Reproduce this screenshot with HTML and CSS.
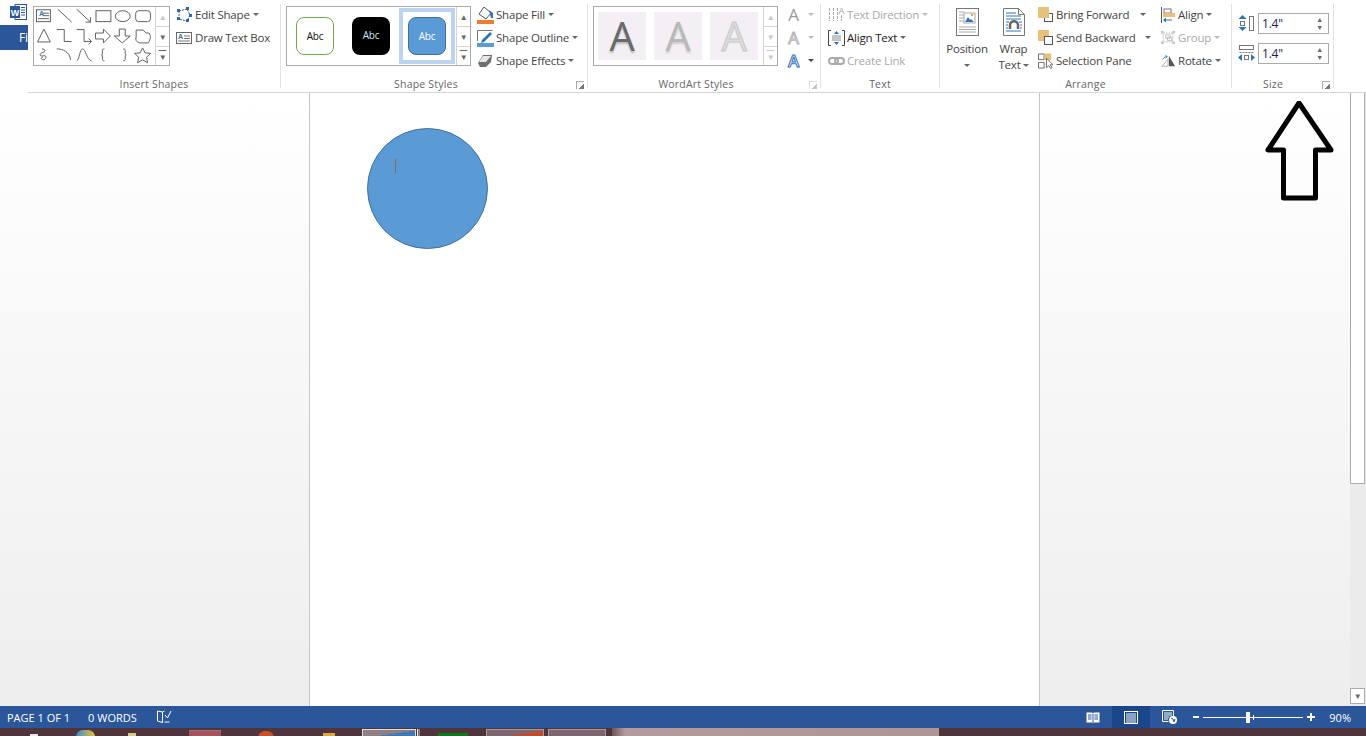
FILE: index.html
```html
<!DOCTYPE html>
<html lang="en">
<head>
    <meta charset="UTF-8">
    <title>Document - Word</title>
    <link rel="stylesheet" href="styles.css">
</head>
<body>
    <div class="ribbon">
        <div class="corner">
            <svg class="word-logo" width="17" height="16" viewBox="0 0 17 16">
                <rect x="5" y="0.500" width="11.500" height="15" fill="#fff" stroke="#2b579a"/>
                <path d="M11 3.500h4M11 6h4M11 8.500h4M11 11h4" stroke="#2b579a"/>
                <rect x="0" y="2" width="10" height="12" fill="#2b579a"/>
                <text x="5" y="11.500" class="word-w">W</text>
            </svg>
            <div class="file-tab">Fi</div>
        </div>
        <div class="groups">

            <!-- Insert Shapes -->
            <div class="group g-shapes">
                <div class="group-body">
                    <div class="gallery shapes-gallery">
                        <svg class="shapes-grid" width="122" height="58" viewBox="0 0 122 58">
                            <g fill="none" stroke="#606060">
                                <rect x="2.500" y="2.500" width="14" height="12" fill="#fff"/>
                                <path d="M9 6h6M9 8.500h6M4 11.500h11"/>
                                <path d="M24 2l14 13"/>
                                <path d="M43 2l14 13M57 10v5h-5"/>
                                <rect x="62.500" y="3.500" width="15" height="11"/>
                                <ellipse cx="89.500" cy="9" rx="7.500" ry="5.500"/>
                                <rect x="102.500" y="3.500" width="15" height="11" rx="3"/>
                            </g>
                            <g fill="none" stroke="#606060" transform="translate(0 -7)">
                                <path d="M10 29l6.500 13H3.500z"/>
                                <path d="M23 29.500h7.500v12H38"/>
                                <path d="M43 29.500h7.500v12H58M55 38.500l3 3-3 3"/>
                                <path d="M62 33h8v-4l7 7-7 7v-4h-8z"/>
                                <path d="M86 29h6v7h5l-8 7-8-7h5z"/>
                                <path d="M103 30h7l3 3h3c2 3 2 6-1 10h-8c-4-1-5-3-4-6z"/>
                            </g>
                            <g fill="none" stroke="#606060" transform="translate(0 -4)">
                                <path d="M8 46c4 0 4 3 0 4-3 1-2 4 1 3 4-1 4 3 1 4-3 0-3-2-1-3"/>
                                <path d="M23 46c6 0 13 3 14 11"/>
                                <path d="M43 58c3-1 3-12 6-12s4 11 9 12"/>
                                <path d="M71 46c-2 0-2 1-2 2v3c0 1-1 1-1 1s1 0 1 1v3c0 1 0 2 2 2"/>
                                <path d="M90 46c2 0 2 1 2 2v3c0 1 1 1 1 1s-1 0-1 1v3c0 1 0 2-2 2"/>
                                <path d="M109.500 45l2.500 5 5.500.5-4 4 1 5.500-5-3-5 3 1-5.500-4-4 5.500-.5z"/>
                            </g>
                            <text x="5" y="8.500" class="tiny-a">A</text>
                        </svg>
                        <div class="spin-col">
                            <div class="spin-btn off">▲</div>
                            <div class="spin-btn">▼</div>
                            <div class="spin-btn more">▼</div>
                        </div>
                    </div>
                    <div class="cmd-col shape-cmds">
                        <div class="cmd">
                            <svg class="ico" width="16" height="16" viewBox="0 0 16 16">
                                <path d="M3 4l8-2 3 6-3 6-8-2z" fill="none" stroke="#555" stroke-dasharray="2 1"/>
                                <path d="M1 2h3v3H1zM10 0h3v3h-3zM13 7h3v3h-3zM10 12h3v3h-3zM1 10h3v3H1z" fill="#2b6cb0"/>
                            </svg>
                            <span>Edit Shape</span><i class="caret"></i>
                        </div>
                        <div class="cmd">
                            <svg class="ico" width="16" height="16" viewBox="0 0 16 16">
                                <rect x="0.500" y="2.500" width="15" height="11" fill="#fff" stroke="#666"/>
                                <path d="M8 6h6M8 8.500h6M2 11h12" stroke="#777"/>
                                <text x="2" y="9" class="tiny-a">A</text>
                            </svg>
                            <span>Draw Text Box</span>
                        </div>
                    </div>
                </div>
                <div class="group-label">Insert Shapes</div>
            </div>

            <!-- Shape Styles -->
            <div class="group g-styles">
                <div class="group-body">
                    <div class="gallery styles-gallery">
                        <div class="style-tiles">
                            <div class="style-cell"><div class="style-tile tile-green">Abc</div></div>
                            <div class="style-cell"><div class="style-tile tile-black">Abc</div></div>
                            <div class="style-cell selected"><div class="style-tile tile-blue">Abc</div></div>
                        </div>
                        <div class="spin-col">
                            <div class="spin-btn">▲</div>
                            <div class="spin-btn">▼</div>
                            <div class="spin-btn more">▼</div>
                        </div>
                    </div>
                    <div class="cmd-col fill-cmds">
                        <div class="cmd">
                            <svg class="ico" width="17" height="18" viewBox="0 0 17 18">
                                <path d="M2 8l5-7 7 6-5 6z" fill="#fff" stroke="#555"/>
                                <path d="M12 4l4 3v5h-2l-1-4z" fill="#2e74b5"/>
                                <rect x="0" y="14" width="17" height="4" fill="#ed7d31"/>
                            </svg>
                            <span>Shape Fill</span><i class="caret"></i>
                        </div>
                        <div class="cmd">
                            <svg class="ico" width="17" height="18" viewBox="0 0 17 18">
                                <path d="M.5 12V1.500h15" fill="none" stroke="#777"/>
                                <path d="M5 11l8-8 2 2-8 8-3 1z" fill="#2e74b5"/>
                                <rect x="0" y="14" width="17" height="4" fill="#5b9bd5"/>
                            </svg>
                            <span>Shape Outline</span><i class="caret"></i>
                        </div>
                        <div class="cmd">
                            <svg class="ico" width="17" height="16" viewBox="0 0 17 16">
                                <path d="M1 10l5-8h9l-1 7-5 5H3z" fill="#6e6e6e"/>
                                <path d="M2 9l4-6h8l-5 6z" fill="#e6e6e6"/>
                            </svg>
                            <span>Shape Effects</span><i class="caret"></i>
                        </div>
                    </div>
                </div>
                <div class="group-label">Shape Styles</div>
                <i class="launcher"></i>
            </div>

            <!-- WordArt Styles -->
            <div class="group g-wordart">
                <div class="group-body">
                    <div class="gallery wordart-gallery">
                        <div class="wa-tiles">
                            <div class="wa-tile wa-dark">A</div>
                            <div class="wa-tile wa-mid">A</div>
                            <div class="wa-tile wa-light">A</div>
                        </div>
                        <div class="spin-col">
                            <div class="spin-btn off">▲</div>
                            <div class="spin-btn off">▼</div>
                            <div class="spin-btn more off">▼</div>
                        </div>
                    </div>
                    <div class="cmd-col wa-cmds">
                        <div class="cmd"><span class="wa-a wa-a-fill">A</span><i class="caret off"></i></div>
                        <div class="cmd"><span class="wa-a wa-a-line">A</span><i class="caret off"></i></div>
                        <div class="cmd"><span class="wa-a wa-a-fx">A</span><i class="caret dark"></i></div>
                    </div>
                </div>
                <div class="group-label">WordArt Styles</div>
                <i class="launcher off"></i>
            </div>

            <!-- Text -->
            <div class="group g-text">
                <div class="group-body">
                    <div class="cmd-col text-cmds">
                        <div class="cmd disabled">
                            <svg class="ico" width="17" height="17" viewBox="0 0 17 17">
                                <path d="M1.500 2v13M5.500 2v13M9.500 2v13M13.500 9v6" stroke="#aaa" stroke-dasharray="3 1"/>
                                <text x="10.500" y="7.500" class="dir-a">A</text>
                            </svg>
                            <span>Text Direction</span><i class="caret off"></i>
                        </div>
                        <div class="cmd">
                            <svg class="ico" width="17" height="16" viewBox="0 0 17 16">
                                <path d="M3 .5H.5v15H3M14 .5h2.500v15H14" fill="none" stroke="#444"/>
                                <path d="M4 6h9M4 8h9M4 10h9" stroke="#888"/>
                                <path d="M8.500 1l2.500 3H6zM8.500 15L6 12h5z" fill="#2e74b5"/>
                            </svg>
                            <span class="ink">Align Text</span><i class="caret"></i>
                        </div>
                        <div class="cmd disabled">
                            <svg class="ico" width="17" height="10" viewBox="0 0 17 10">
                                <rect x="1" y="2" width="9" height="6" rx="3" fill="none" stroke="#aaa" stroke-width="2"/>
                                <rect x="7" y="2" width="9" height="6" rx="3" fill="none" stroke="#aaa" stroke-width="2"/>
                            </svg>
                            <span>Create Link</span>
                        </div>
                    </div>
                </div>
                <div class="group-label">Text</div>
            </div>

            <!-- Arrange -->
            <div class="group g-arrange">
                <div class="group-body">
                    <div class="big-btn btn-position">
                        <svg width="23" height="28" viewBox="0 0 23 28">
                            <rect x="0.500" y="0.500" width="22" height="27" fill="#fff" stroke="#777"/>
                            <path d="M3 4h5M3 7h5M3 10h5M3 13h5M3 19h17M3 21.500h17M3 24h17" stroke="#aaa"/>
                            <rect x="8" y="5" width="11" height="10" fill="#fff" stroke="#aaa"/>
                            <path d="M9 14l3-5 2 3 1-1 3 3z" fill="#2e74b5"/>
                            <circle cx="16" cy="7" r="1.200" fill="#e8a33d"/>
                        </svg>
                        <div class="big-label">Position</div>
                        <i class="caret"></i>
                    </div>
                    <div class="big-btn btn-wrap">
                        <svg width="22" height="28" viewBox="0 0 22 28">
                            <path d="M.5.500h15l6 6v21H.5z" fill="#fff" stroke="#777"/>
                            <path d="M15.500.500v6h6" fill="none" stroke="#777"/>
                            <path d="M3 5h10M3 8h15M3 11h15M3 14h3M16 14h3M3 17h2M17 17h2M3 20h2M17 20h2M3 23h15" stroke="#2e74b5"/>
                            <path d="M7 21v-4c0-5 8-5 8 0v4" fill="none" stroke="#666" stroke-width="2.500"/>
                        </svg>
                        <div class="big-label">Wrap<br>Text<i class="caret"></i></div>
                    </div>
                    <div class="cmd-col order-cmds">
                        <div class="cmd">
                            <svg class="ico" width="15" height="15" viewBox="0 0 15 15">
                                <rect x="6.500" y="6.500" width="8" height="8" fill="#fff" stroke="#555"/>
                                <rect x="0" y="0" width="11" height="11" fill="#e8c07d"/>
                            </svg>
                            <span>Bring Forward</span><i class="caret far"></i>
                        </div>
                        <div class="cmd">
                            <svg class="ico" width="15" height="15" viewBox="0 0 15 15">
                                <rect x="0" y="0" width="11" height="11" fill="#e8c07d"/>
                                <rect x="6.500" y="6.500" width="8" height="8" fill="#fff" stroke="#555"/>
                            </svg>
                            <span>Send Backward</span><i class="caret near"></i>
                        </div>
                        <div class="cmd">
                            <svg class="ico" width="15" height="16" viewBox="0 0 16 16">
                                <path d="M.5.500h6v6h-6zM.5 9.500h6v6h-6z" fill="#fff" stroke="#666"/>
                                <rect x="7" y="0" width="7" height="7" fill="#e8c07d"/>
                                <path d="M9 5v10l2.500-2 2 3 1.500-1-2-3h3z" fill="#fff" stroke="#666"/>
                            </svg>
                            <span>Selection Pane</span>
                        </div>
                    </div>
                    <div class="cmd-col align-cmds">
                        <div class="cmd">
                            <svg class="ico" width="14" height="16" viewBox="0 0 14 16">
                                <path d="M.5 0v16" stroke="#555"/>
                                <rect x="3" y="2" width="7" height="4" fill="#fff" stroke="#777"/>
                                <rect x="2" y="6" width="12" height="4" fill="#e8c07d"/>
                                <path d="M2 13l3-2.500v2h6v1H5v2z" fill="#2e74b5"/>
                            </svg>
                            <span>Align</span><i class="caret"></i>
                        </div>
                        <div class="cmd disabled">
                            <svg class="ico" width="14" height="15" viewBox="0 0 16 15">
                                <path d="M2.500 2.500h11v10h-11z" fill="none" stroke="#bbb" stroke-dasharray="2 1"/>
                                <path d="M5.500 4.500h5v4h-5zM7.500 7h5v4h-5z" fill="none" stroke="#bbb"/>
                                <path d="M0 0h3v3H0zM13 0h3v3h-3zM0 12h3v3H0zM13 12h3v3h-3z" fill="#c4c4c4"/>
                            </svg>
                            <span>Group</span><i class="caret off"></i>
                        </div>
                        <div class="cmd">
                            <svg class="ico" width="14" height="14" viewBox="0 0 16 14">
                                <path d="M9 1l7 12H9z" fill="#555"/>
                                <path d="M8 5L1 13h7z" fill="none" stroke="#aaa"/>
                                <path d="M2 5c1-2 3-3 5-3M5 0l2 2-2 2" fill="none" stroke="#2e74b5"/>
                            </svg>
                            <span>Rotate</span><i class="caret"></i>
                        </div>
                    </div>
                </div>
                <div class="group-label">Arrange</div>
            </div>

            <!-- Size -->
            <div class="group g-size">
                <div class="group-body size-body">
                    <div class="size-row">
                        <svg width="17" height="17" viewBox="0 0 17 17">
                            <rect x="11.500" y="1.500" width="4" height="14" fill="#fff" stroke="#777"/>
                            <path d="M4.500 0l4 4h-8zM4.500 16l-4-4h8z" fill="#2e74b5"/>
                            <rect x="2.500" y="6.500" width="4" height="4" fill="none" stroke="#777"/>
                        </svg>
                        <div class="size-input"><span>1.4"</span><div class="arrows"><b>▲</b><b>▼</b></div></div>
                    </div>
                    <div class="size-row">
                        <svg width="17" height="17" viewBox="0 0 17 17">
                            <rect x="1.500" y="0.500" width="14" height="4" fill="#fff" stroke="#777"/>
                            <path d="M1.500 7.500h14" stroke="#777" stroke-dasharray="2 1"/>
                            <path d="M0 12.500l4-3.500v7zM17 12.500l-4-3.500v7z" fill="#2e74b5"/>
                            <rect x="6.500" y="10.500" width="4" height="4" fill="none" stroke="#777"/>
                        </svg>
                        <div class="size-input"><span>1.4"</span><div class="arrows"><b>▲</b><b>▼</b></div></div>
                    </div>
                </div>
                <div class="group-label">Size</div>
                <i class="launcher"></i>
            </div>
        </div>
    </div>

    <div class="workspace">
        <div class="doc-area">
            <div class="page">
                <div class="circle"><i class="text-cursor"></i></div>
            </div>
            <!-- arrow was pasted over the screenshot -->
            <svg class="note-arrow" width="70" height="102" viewBox="0 0 70 102">
                <path d="M34 2L3 49H18.500V97H50.500V49H66Z" fill="none" stroke="#000" stroke-width="5" stroke-linejoin="round"/>
            </svg>
        </div>
        <div class="scrollbar">
            <div class="thumb"></div>
            <div class="scroll-down">▼</div>
        </div>
    </div>

    <div class="statusbar">
        <span class="st-page">PAGE 1 OF 1</span>
        <span class="st-words">0 WORDS</span>
        <svg class="st-proof" width="16" height="14" viewBox="0 0 16 14">
            <path d="M6.500 2L1.500 1v10l5 1.500V2zM6.500 12.500V2l2-1M8.500 12h5" fill="none" stroke="#fff"/>
            <path d="M9 5l2.500 3L15 1" fill="none" stroke="#fff"/>
        </svg>
        <div class="st-right">
            <div class="view-btn">
                <svg width="14" height="13" viewBox="0 0 14 13">
                    <path d="M.5 1.500h5.500L7 2.500l1-1h5.500v10H8L7 12.500l-1-1H.5z" fill="#fff"/>
                    <path d="M7 3v9M2 4h3.500M2 6h3.500M2 8h3.500M8.500 4H12M8.500 6H12M8.500 8H12" stroke="#2b579a"/>
                </svg>
            </div>
            <div class="view-btn active">
                <svg width="14" height="13" viewBox="0 0 14 13">
                    <rect x="0.500" y="0.500" width="13" height="12" fill="none" stroke="#fff"/>
                    <path d="M2 3h10M2 5h10M2 7h10M2 9h10M2 11h10" stroke="#fff"/>
                </svg>
            </div>
            <div class="view-btn">
                <svg width="15" height="14" viewBox="0 0 15 14">
                    <path d="M.5.500h11v6M.5.500v11h6" fill="none" stroke="#fff"/>
                    <path d="M2 3h8M2 5h8M2 7h5M2 9h4" stroke="#fff"/>
                    <circle cx="11" cy="10" r="4" fill="#fff"/>
                    <path d="M9 8l2 1 1 3 1-3" stroke="#2b579a" fill="none"/>
                </svg>
            </div>
            <div class="zoom-ctl">
                <i class="zoom-minus"></i>
                <div class="zoom-track"><i class="zoom-mid"></i><i class="zoom-knob"></i></div>
                <i class="zoom-plus"></i>
            </div>
            <span class="zoom-pct">90%</span>
        </div>
    </div>

    <div class="taskbar">
        <i class="tb-item tb-a"></i>
        <i class="tb-item tb-b"></i>
        <i class="tb-item tb-c"></i>
        <i class="tb-item tb-1"></i>
        <i class="tb-item tb-2"></i>
        <i class="tb-item tb-3"></i>
        <i class="tb-item tb-word"></i>
        <i class="tb-item tb-edge"></i>
        <i class="tb-item tb-green"></i>
        <i class="tb-item tb-5"></i>
        <i class="tb-item tb-6"></i>
        <i class="tb-wall"></i>
    </div>
</body>
</html>
```

FILE: styles.css
```css
* {
    margin: 0;
    padding: 0;
    box-sizing: border-box;
}

html, body {
    height: 100%;
    overflow: hidden;
}

body {
    display: flex;
    flex-direction: column;
    font-family: 'Open Sans', 'Liberation Sans', sans-serif;
    font-size: 11.500px;
    letter-spacing: -0.2px;
    color: #444;
    background: #fff;
}

/* Ribbon */
.ribbon {
    display: flex;
    height: 93px;
    flex: none;
    background: #fff;
}

.corner {
    width: 28px;
    flex: none;
}

.word-logo {
    display: block;
    margin: 4px 0 5px 10px;
}

.word-w {
    font: bold 9px 'Liberation Sans', sans-serif;
    fill: #fff;
    text-anchor: middle;
}

.file-tab {
    height: 25px;
    background: #2b579a;
    color: #fff;
    font-size: 12px;
    line-height: 25px;
    padding-left: 19px;
    overflow: hidden;
}

.groups {
    flex: 1;
    display: flex;
    height: 93px;
    padding-top: 4px;
    border-bottom: 1px solid #d5d5d5;
}

.group {
    position: relative;
    height: 84px;
    border-right: 1px solid #e1e1e1;
    flex: none;
}

.g-shapes { width: 253px; }
.g-styles { width: 307px; }
.g-wordart { width: 233px; }
.g-text { width: 119px; }
.g-arrange { width: 292px; }
.g-size { width: 102px; }

.group-body {
    display: flex;
    height: 73px;
    padding-left: 5px;
}

.g-text .group-body { padding-left: 7px; }
.g-size .group-body { padding-left: 6px; }

.group-label {
    height: 11px;
    line-height: 14px;
    text-align: center;
    font-size: 10.500px;
    color: #666;
    letter-spacing: 0.2px;
}

.g-styles .group-label,
.g-wordart .group-label {
    padding-right: 16px;
}

.g-size .group-label {
    padding-right: 19px;
}

.launcher {
    position: absolute;
    right: 3px;
    bottom: -1px;
    width: 8px;
    height: 8px;
    border-left: 1px solid #aaa;
    border-top: 1px solid #aaa;
    background: linear-gradient(135deg, transparent 60%, #777 60%);
}

.launcher.off {
    opacity: 0.4;
}

/* Galleries */
.gallery {
    display: flex;
    height: 60px;
    margin-top: 2px;
    border: 1px solid #ababab;
    flex: none;
}

.shapes-gallery { width: 137px; }
.styles-gallery { width: 185px; }
.wordart-gallery { width: 185px; }

.shapes-grid {
    display: block;
    flex: 1;
}

.tiny-a {
    font: bold 7px 'Liberation Sans', sans-serif;
    fill: #2e74b5;
}

.dir-a {
    font: 9px 'Liberation Sans', sans-serif;
    fill: #999;
}

.spin-col {
    width: 14px;
    margin-left: auto;
    flex: none;
    display: flex;
    flex-direction: column;
    border-left: 1px solid #d4d4d4;
}

.spin-btn {
    flex: 1;
    text-align: center;
    font-size: 8px;
    line-height: 19px;
    color: #666;
    border-bottom: 1px solid #d4d4d4;
}

.spin-btn:last-child {
    border-bottom: none;
}

.spin-btn.off {
    color: #c8c8c8;
}

.spin-btn.more {
    text-decoration: overline;
}

.style-tiles {
    display: flex;
    flex: 1;
}

.style-cell {
    width: 56px;
    height: 56px;
    margin-top: 1px;
    display: flex;
    align-items: center;
    justify-content: center;
}

.style-cell.selected {
    border: 4px solid #bcd3ef;
}

.style-tile {
    width: 38px;
    height: 38px;
    border-radius: 8px;
    font-size: 10px;
    line-height: 36px;
    text-align: center;
}

.tile-green {
    border: 1px solid #70ad47;
    color: #111;
}

.tile-black {
    background: #000;
    color: #cfe2f5;
}

.tile-blue {
    background: #5b9bd5;
    border: 1px solid #41719c;
    color: #fff;
}

.wa-tiles {
    display: flex;
    flex: 1;
    gap: 8px;
    padding: 5px 0 0 4px;
}

.wa-tile {
    width: 48px;
    height: 48px;
    background: #f4eff4;
    text-align: center;
    font: 40px/48px 'Open Sans', sans-serif;
}

.wa-dark {
    color: #696969;
    text-shadow: 0 2px 2px #bbb;
}

.wa-mid {
    color: #b8b8b8;
    text-shadow: 0 2px 2px #ccc;
}

.wa-light {
    color: #dcdcdc;
    -webkit-text-stroke: 1px #c8c8c8;
}

/* Command rows */
.cmd-col {
    display: flex;
    flex-direction: column;
    flex: none;
    margin-top: -1px;
}

.cmd {
    height: 23px;
    display: flex;
    align-items: center;
    white-space: nowrap;
}

.cmd.disabled {
    color: #a8a8a8;
}

.ico {
    flex: none;
    margin-right: 3px;
}

.ink {
    color: #222;
}

.caret {
    display: inline-block;
    flex: none;
    width: 0;
    height: 0;
    margin-left: 3px;
    border-left: 3px solid transparent;
    border-right: 3px solid transparent;
    border-top: 3px solid #666;
    vertical-align: middle;
}

.caret.off {
    border-top-color: #bbb;
}

.caret.dark {
    border-top-color: #444;
}

.caret.far {
    margin-left: 11px;
}

.caret.near {
    margin-left: 9px;
}

.shape-cmds { margin-left: 6px; }
.fill-cmds { margin-left: 6px; }
.wa-cmds { margin-left: 8px; }
.order-cmds { margin-left: 2px; }

.wa-a {
    width: 15px;
    text-align: center;
    font-size: 17px;
    margin-right: 4px;
}

.wa-a-fill {
    color: #9a9a9a;
}

.wa-a-line {
    color: #fff;
    -webkit-text-stroke: 1px #b4b4b4;
}

.wa-a-fx {
    color: #fff;
    font-weight: 600;
    -webkit-text-stroke: 1px #2e74b5;
}

.fill-cmds .ico { margin-right: 2px; }
.text-cmds .ico { margin-right: 2px; }

/* Big buttons */
.big-btn {
    display: flex;
    flex-direction: column;
    align-items: center;
    flex: none;
    padding-top: 4px;
    text-align: center;
}

.big-btn svg {
    display: block;
}

.big-label {
    margin-top: 5px;
    line-height: 16px;
}

.btn-position {
    width: 44px;
}

.btn-position .caret {
    margin: 7px 0 0;
}

.btn-wrap {
    width: 45px;
    margin-left: 2px;
}

.btn-wrap .caret {
    margin-left: 2px;
}

.order-cmds {
    width: 123px;
}

/* Size */
.size-body {
    flex-direction: column;
    gap: 9px;
    padding-top: 9px;
}

.size-row {
    display: flex;
    align-items: center;
    gap: 3px;
}

.size-input {
    width: 71px;
    height: 21px;
    border: 1px solid #ababab;
    display: flex;
    align-items: center;
    justify-content: space-between;
    padding: 0 5px 0 3px;
    color: #202040;
    font-size: 12px;
}

.arrows {
    display: flex;
    flex-direction: column;
    font-size: 7px;
    line-height: 8px;
    color: #666;
}

.arrows b {
    font-weight: normal;
}

/* Document */
.workspace {
    flex: 1;
    min-height: 0;
    display: flex;
}

.doc-area {
    position: relative;
    flex: 1;
    background: linear-gradient(#fff 0%, #eeeeee 100%);
    padding-left: 309px;
    overflow: hidden;
}

.page {
    width: 731px;
    height: 100%;
    background: #fff;
    border-left: 1px solid #c6c6c6;
    border-right: 1px solid #c6c6c6;
    padding: 35px 0 0 57px;
}

.circle {
    position: relative;
    width: 121px;
    height: 121px;
    border-radius: 50%;
    background: #5b9bd5;
    border: 1px solid #41719c;
}

.text-cursor {
    position: absolute;
    left: 27px;
    top: 30px;
    width: 1px;
    height: 14px;
    background: #8a6a50;
}

.note-arrow {
    position: absolute;
    left: 1265px;
    top: 8px;
}

.scrollbar {
    width: 16px;
    flex: none;
    display: flex;
    flex-direction: column;
    background: #ebebeb;
}

.thumb {
    height: 391px;
    margin-right: 1px;
    background: #fff;
    border: 1px solid #ababab;
    border-top: none;
}

.scroll-down {
    margin: auto 1px 2px 0;
    height: 16px;
    background: #fff;
    border: 1px solid #ababab;
    color: #666;
    font-size: 8px;
    line-height: 14px;
    text-align: center;
}

/* Status bar */
.statusbar {
    height: 22px;
    flex: none;
    display: flex;
    align-items: center;
    background: #2b579a;
    color: #fff;
    font-size: 11px;
    letter-spacing: 0;
    padding-left: 7px;
}

.st-words {
    margin-left: 18px;
}

.st-proof {
    margin-left: 19px;
}

.st-right {
    margin-left: auto;
    height: 100%;
    display: flex;
    align-items: center;
}

.view-btn {
    width: 38px;
    height: 100%;
    display: flex;
    align-items: center;
    justify-content: center;
}

.view-btn.active {
    background: #19478a;
}

.zoom-ctl {
    display: flex;
    align-items: center;
    margin-left: 5px;
}

.zoom-minus {
    width: 6px;
    height: 2px;
    background: #fff;
}

.zoom-plus {
    width: 8px;
    height: 8px;
    background: linear-gradient(#fff, #fff) center / 8px 2px no-repeat, linear-gradient(#fff, #fff) center / 2px 8px no-repeat;
}

.zoom-track {
    position: relative;
    width: 100px;
    height: 1px;
    margin: 0 4px;
    background: #fff;
}

.zoom-knob {
    position: absolute;
    left: 43px;
    top: -5px;
    width: 4px;
    height: 11px;
    background: #fff;
}

.zoom-mid {
    position: absolute;
    left: 50px;
    top: -2px;
    width: 1px;
    height: 5px;
    background: #fff;
}

.zoom-pct {
    width: 51px;
    text-align: right;
    padding-right: 15px;
}

/* Taskbar strip at the bottom edge */
.taskbar {
    height: 8px;
    flex: none;
    display: flex;
    background: #4f343c;
    position: relative;
    overflow: hidden;
}

.tb-item {
    position: absolute;
    top: 1px;
    height: 7px;
    background: #85707a;
}

.tb-a { left: 30px; width: 8px; top: 6px; background: #e6e6e6; }
.tb-b { left: 76px; width: 19px; top: 2px; border-radius: 9px 9px 0 0; background: linear-gradient(90deg, #3e8ad0, #e8c23a); }
.tb-c { left: 128px; width: 8px; top: 5px; background: #d9c98a; }
.tb-1 { left: 189px; width: 32px; top: 2px; background: #a8505e; border-top: 1px solid #8d7d84; }
.tb-2 { left: 258px; width: 16px; top: 3px; border-radius: 8px 8px 0 0; background: #c7502c; }
.tb-3 { left: 323px; width: 12px; top: 5px; background: #d9a84a; }
.tb-word { left: 362px; width: 54px; background: linear-gradient(172deg, #8f7f85 60%, #3e78b8 60%); border-top: 1px solid #ddd; border-left: 1px solid #ddd; border-right: 1px solid #ddd; }
.tb-edge { left: 417px; width: 3px; background: #8f7f85; border-left: 1px solid #ddd; }
.tb-green { left: 438px; width: 30px; top: 5px; background: #0a7a1d; }
.tb-5 { left: 486px; width: 58px; background: linear-gradient(172deg, #7d6670 65%, #c74a28 65%); border-top: 1px solid #a89aa0; border-left: 1px solid #a89aa0; border-right: 1px solid #a89aa0; }
.tb-6 { left: 548px; width: 58px; background: #7d6670; border-top: 1px solid #a89aa0; border-left: 1px solid #a89aa0; border-right: 1px solid #a89aa0; }

.tb-wall {
    position: absolute;
    left: 612px;
    top: 0;
    width: 327px;
    height: 8px;
    background: linear-gradient(90deg, #6e5258, #b49a9c 4%, #b09597);
}
```
